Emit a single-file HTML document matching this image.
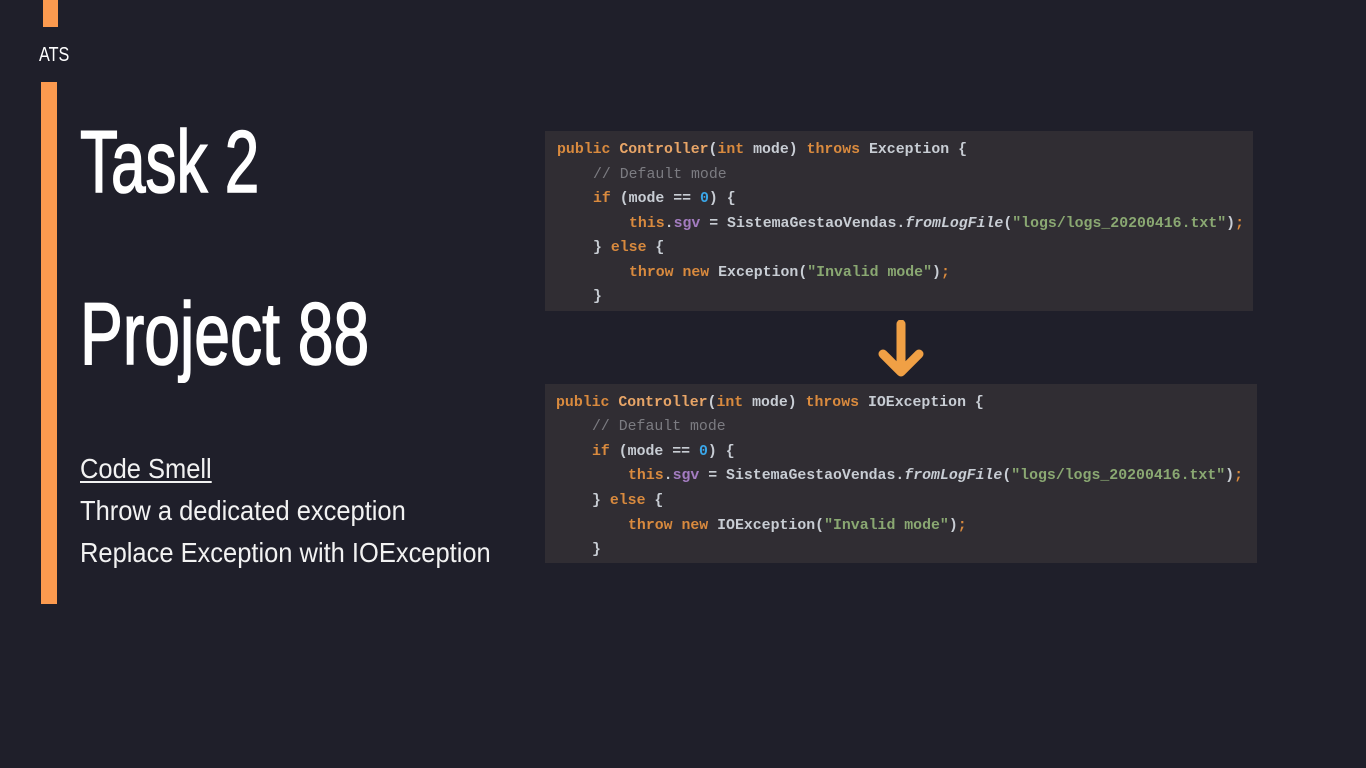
<!DOCTYPE html>
<html><head><meta charset="utf-8"><style>
body{margin:0;width:1366px;height:768px;background:#1f1f2a;overflow:hidden;position:relative;font-family:"Liberation Sans",sans-serif;color:#fff}
.a{position:absolute;white-space:nowrap}
.bar{position:absolute;background:#fb9a4f}
.code{position:absolute;background:#302d33;font-family:"Liberation Mono",monospace;font-size:15px;color:#c8cdd4;font-weight:bold}
.code div{position:absolute;white-space:pre;transform:scaleX(.99);transform-origin:left}
.k{color:#d98a3e}.f{color:#e8a567}.s{color:#8aa872}.c{color:#7c7c82;font-weight:normal}.n{color:#3aa6e8}.p{color:#a37cc0}.i{font-style:italic}
.t{-webkit-text-stroke:1.6px #fff}
</style></head><body>
<div class="bar" style="left:43px;top:0;width:15px;height:27px"></div>
<div class="bar" style="left:41px;top:82px;width:16px;height:522px"></div>
<div class="a" style="left:39px;top:44px;font-size:20px;transform:scaleX(.81);transform-origin:left">ATS</div>
<div class="a t" style="left:80px;top:111px;font-size:88px;transform:scaleX(.705);transform-origin:left">Task 2</div>
<div class="a t" style="left:80px;top:283px;font-size:88px;transform:scaleX(.73);transform-origin:left">Project 88</div>
<div class="a" style="left:80px;top:448px;font-size:28px;line-height:42px;color:#f2f2f2;transform:scaleX(.91);transform-origin:left">
<span style="text-decoration:underline;text-underline-offset:3px">Code Smell</span><br>Throw a dedicated exception<br>Replace Exception with IOException</div>

<div class="code" style="left:545px;top:131px;width:708px;height:180px">
<div style="left:12px;top:10px"><span class="k">public</span> <span class="f">Controller</span>(<span class="k">int</span> mode) <span class="k">throws</span> Exception {</div>
<div style="left:48px;top:35px" class="c">// Default mode</div>
<div style="left:48px;top:59px"><span class="k">if</span> (mode == <span class="n">0</span>) {</div>
<div style="left:84px;top:84px"><span class="k">this</span>.<span class="p">sgv</span> = SistemaGestaoVendas.<span class="i">fromLogFile</span>(<span class="s">"logs/logs_20200416.txt"</span>)<span class="k">;</span></div>
<div style="left:48px;top:108px">} <span class="k">else</span> {</div>
<div style="left:84px;top:133px"><span class="k">throw new</span> Exception(<span class="s">"Invalid mode"</span>)<span class="k">;</span></div>
<div style="left:48px;top:157px">}</div>
</div>
<svg class="a" style="left:878px;top:320px" width="46" height="58" viewBox="0 0 46 58"><path d="M23 4V50M5 34L23 52L41 34" fill="none" stroke="#f0a045" stroke-width="9" stroke-linecap="round" stroke-linejoin="round"/></svg>
<div class="code" style="left:545px;top:384px;width:712px;height:179px">
<div style="left:11px;top:10px"><span class="k">public</span> <span class="f">Controller</span>(<span class="k">int</span> mode) <span class="k">throws</span> IOException {</div>
<div style="left:47px;top:34px" class="c">// Default mode</div>
<div style="left:47px;top:59px"><span class="k">if</span> (mode == <span class="n">0</span>) {</div>
<div style="left:83px;top:83px"><span class="k">this</span>.<span class="p">sgv</span> = SistemaGestaoVendas.<span class="i">fromLogFile</span>(<span class="s">"logs/logs_20200416.txt"</span>)<span class="k">;</span></div>
<div style="left:47px;top:108px">} <span class="k">else</span> {</div>
<div style="left:83px;top:133px"><span class="k">throw new</span> IOException(<span class="s">"Invalid mode"</span>)<span class="k">;</span></div>
<div style="left:47px;top:157px">}</div>
</div>
</body></html>
